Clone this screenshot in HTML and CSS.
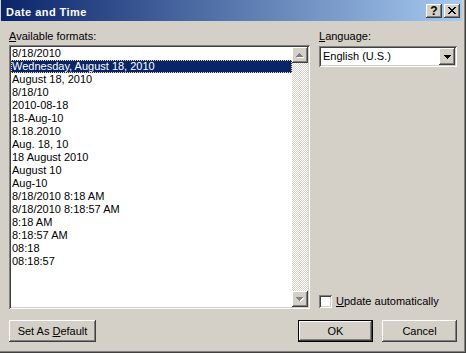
FILE: index.html
```html
<!DOCTYPE html>
<html>
<head>
<meta charset="utf-8">
<title>Date and Time</title>
<link rel="stylesheet" href="styles.css">
</head>
<body>
<div class="window">
  <div class="titlebar">
    <span class="title">Date and Time</span>
    <div class="caption-buttons">
      <div class="cap-btn help">?</div>
      <div class="cap-btn close">
        <svg width="8" height="7" viewBox="0 0 8 7" shape-rendering="crispEdges"><path fill="#000" d="M0 0h2v1H0z M6 0h2v1H6z M1 1h2v1H1z M5 1h2v1H5z M2 2h4v1H2z M3 3h2v1H3z M2 4h4v1H2z M1 5h2v1H1z M5 5h2v1H5z M0 6h2v1H0z M6 6h2v1H6z"/></svg>
      </div>
    </div>
  </div>
  <div class="body">
    <div class="main">
      <div class="left">
        <div class="field-label"><u>A</u>vailable formats:</div>
        <div class="listbox">
          <ul class="items">
            <li>8/18/2010</li>
            <li class="selected">Wednesday, August 18, 2010</li>
            <li>August 18, 2010</li>
            <li>8/18/10</li>
            <li>2010-08-18</li>
            <li>18-Aug-10</li>
            <li>8.18.2010</li>
            <li>Aug. 18, 10</li>
            <li>18 August 2010</li>
            <li>August 10</li>
            <li>Aug-10</li>
            <li>8/18/2010 8:18 AM</li>
            <li>8/18/2010 8:18:57 AM</li>
            <li>8:18 AM</li>
            <li>8:18:57 AM</li>
            <li>08:18</li>
            <li>08:18:57</li>
          </ul>
          <div class="scrollbar">
            <div class="sb-btn">
              <svg width="8" height="5" viewBox="0 0 8 5" shape-rendering="crispEdges"><path fill="#fff" d="M4 1h1v1H4z M3 2h3v1H3z M2 3h5v1H2z M1 4h7v1H1z"/><path fill="#808080" d="M3 0h1v1H3z M2 1h3v1H2z M1 2h5v1H1z M0 3h7v1H0z"/></svg>
            </div>
            <div class="sb-track"></div>
            <div class="sb-btn">
              <svg width="8" height="5" viewBox="0 0 8 5" shape-rendering="crispEdges"><path fill="#fff" d="M1 1h7v1H1z M2 2h5v1H2z M3 3h3v1H3z M4 4h1v1H4z"/><path fill="#808080" d="M0 0h7v1H0z M1 1h5v1H1z M2 2h3v1H2z M3 3h1v1H3z"/></svg>
            </div>
          </div>
        </div>
      </div>
      <div class="right">
        <div class="field-label"><u>L</u>anguage:</div>
        <div class="combo">
          <div class="combo-text">English (U.S.)</div>
          <div class="combo-btn">
            <svg width="7" height="4" viewBox="0 0 7 4" shape-rendering="crispEdges"><path fill="#000" d="M0 0h7v1H0z M1 1h5v1H1z M2 2h3v1H2z M3 3h1v1H3z"/></svg>
          </div>
        </div>
        <div class="spacer"></div>
        <div class="checkrow">
          <div class="checkbox"></div>
          <span class="check-label"><u>U</u>pdate automatically</span>
        </div>
      </div>
    </div>
    <div class="buttons">
      <div class="btn wide"><span>Set As <u>D</u>efault</span></div>
      <div class="btn ok"><span>OK</span></div>
      <div class="btn"><span>Cancel</span></div>
    </div>
  </div>
</div>
</body>
</html>
```
FILE: styles.css
```css
* { box-sizing: border-box; }
html, body { margin: 0; padding: 0; }
body {
  width: 466px;
  height: 353px;
  overflow: hidden;
  background: #d4d0c8;
  font-family: "Liberation Sans", Arial, sans-serif;
  font-size: 11px;
  line-height: 13px;
  color: #000;
}
.window {
  width: 466px;
  height: 353px;
  display: flex;
  flex-direction: column;
  padding: 0 4px 4px 1px;
  background: #d4d0c8;
  box-shadow: inset -1px -1px #404040, inset -2px -2px #808080;
}
.titlebar {
  height: 21px;
  flex: none;
  display: flex;
  align-items: flex-start;
  padding: 0 2px 0 5px;
  background: linear-gradient(to right, #0a246a, #a6caf0);
}
.title {
  color: #fff;
  font-weight: bold;
  padding-top: 6px;
  letter-spacing: 0.45px;
}
.caption-buttons {
  margin-left: auto;
  margin-top: 4px;
  display: flex;
  gap: 2px;
}
.cap-btn {
  width: 16px;
  height: 14px;
  display: flex;
  align-items: center;
  justify-content: center;
  background: #d4d0c8;
  box-shadow: inset -1px -1px #404040, inset 1px 1px #fff, inset -2px -2px #808080;
  font-weight: bold;
  font-size: 12px;
}
.cap-btn.close svg { margin-top: -1px; }
.body {
  flex: 1;
  display: flex;
  flex-direction: column;
  padding: 9px 5px 7px 8px;
  min-height: 0;
}
.main {
  flex: 1;
  display: flex;
  gap: 9px;
  min-height: 0;
}
.left {
  width: 301px;
  display: flex;
  flex-direction: column;
}
.right {
  flex: 1;
  display: flex;
  flex-direction: column;
}
.field-label { height: 13px; white-space: nowrap; }
.listbox {
  margin-top: 2px;
  flex: 1;
  display: flex;
  padding: 2px;
  background: #fff;
  min-height: 0;
  box-shadow: inset 1px 1px #808080, inset -1px -1px #fff, inset 2px 2px #404040, inset -2px -2px #d4d0c8;
}
.items {
  flex: 1;
  list-style: none;
  margin: 0;
  padding: 0;
  overflow: hidden;
}
.items li {
  height: 13px;
  padding-left: 1px;
  white-space: nowrap;
}
.items li.selected {
  background: #0a246a;
  color: #fff;
  outline: 1px dotted #f5db95;
  outline-offset: -1px;
}
.scrollbar {
  width: 16px;
  display: flex;
  flex-direction: column;
}
.sb-btn {
  height: 16px;
  flex: none;
  display: flex;
  align-items: center;
  justify-content: center;
  background: #d4d0c8;
  box-shadow: inset -1px -1px #404040, inset 1px 1px #fff, inset -2px -2px #808080;
}
.sb-track {
  flex: 1;
  background: repeating-conic-gradient(#fff 0 25%, #d4d0c8 0 50%) 0 0 / 2px 2px;
}
.combo {
  margin-top: 3px;
  height: 21px;
  display: flex;
  padding: 2px;
  background: #fff;
  box-shadow: inset 1px 1px #808080, inset -1px -1px #fff, inset 2px 2px #404040, inset -2px -2px #d4d0c8;
}
.combo-text {
  flex: 1;
  padding: 2px 0 0 2px;
  white-space: nowrap;
}
.combo-btn {
  width: 16px;
  display: flex;
  align-items: center;
  justify-content: center;
  background: #d4d0c8;
  box-shadow: inset -1px -1px #404040, inset 1px 1px #fff, inset -2px -2px #808080;
}
.spacer { flex: 1; }
.checkrow {
  height: 13px;
  margin-bottom: 1px;
  display: flex;
  align-items: center;
}
.checkbox {
  width: 13px;
  height: 13px;
  background: #fff;
  box-shadow: inset 1px 1px #808080, inset -1px -1px #fff, inset 2px 2px #404040, inset -2px -2px #d4d0c8;
}
.check-label { margin-left: 4px; white-space: nowrap; }
.buttons {
  flex: none;
  display: flex;
  height: 22px;
  margin-top: 11px;
  gap: 9px;
}
.btn {
  width: 75px;
  height: 22px;
  display: flex;
  align-items: center;
  justify-content: center;
  background: #d4d0c8;
  box-shadow: inset -1px -1px #404040, inset 1px 1px #fff, inset -2px -2px #808080;
  white-space: nowrap;
}
.btn.wide { width: 87px; }
.btn.ok {
  margin-left: auto;
  border: 1px solid #000;
}
```
